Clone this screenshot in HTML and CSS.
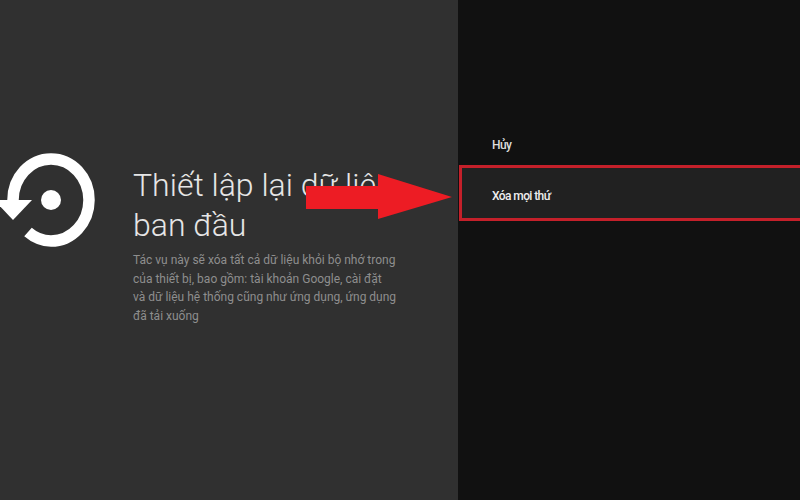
FILE: index.html
```html
<!DOCTYPE html>
<html lang="vi">
<head>
    <meta charset="UTF-8">
    <title>Thiết lập lại dữ liệu ban đầu</title>
    <link rel="stylesheet" href="styles.css">
</head>
<body>
    <div class="screen">
        <div class="info-panel">
            <svg class="reset-icon" width="100" height="100" viewBox="0 150 100 100">
                <path class="ring" d="M13 200 A38 41 0 0 1 51 159 A38 41 0 0 1 89 200 A38 41 0 0 1 51 241 A38 41 0 0 1 28 232"/>
                <polygon class="solid" points="-6,200 32,200 13,220"/>
                <circle class="solid" cx="51" cy="200" r="10"/>
            </svg>
            <div class="info-text">
                <h1>Thiết lập lại dữ liệu ban đầu</h1>
                <p>Tác vụ này sẽ xóa tất cả dữ liệu khỏi bộ nhớ trong<br>của thiết bị, bao gồm: tài khoản Google, cài đặt<br>và dữ liệu hệ thống cũng như ứng dụng, ứng dụng<br>đã tải xuống</p>
            </div>
        </div>
        <div class="menu-panel">
            <div class="menu-item">Hủy</div>
            <div class="menu-item selected">Xóa mọi thứ</div>
        </div>
        <!-- red annotation arrow on top of the title -->
        <svg class="arrow" width="148" height="46" viewBox="0 0 148 46">
            <polygon points="0,12 72,12 72,0 146,23 72,45 72,35 0,35"/>
        </svg>
    </div>
</body>
</html>
```

FILE: styles.css
```css
* {
    box-sizing: border-box;
}
html, body {
    margin: 0;
    height: 100%;
}
body {
    font-family: Roboto, "Noto Sans", sans-serif;
    background: #111;
}
.screen {
    position: relative;
    display: flex;
    width: 800px;
    height: 500px;
    overflow: hidden;
}
.info-panel {
    width: 458px;
    display: flex;
    align-items: flex-start;
    padding-top: 150px;
    background: #303030;
}
.reset-icon {
    flex: none;
    margin-right: 33px;
}
.ring {
    fill: none;
    stroke: #fff;
    stroke-width: 11.5;
}
.solid {
    fill: #fff;
}
.info-text {
    width: 290px;
    padding-top: 15px;
}
.info-text h1 {
    margin: 0 0 6px;
    font-size: 32px;
    font-weight: 300;
    line-height: 40px;
    color: #e6e6e6;
}
.info-text p {
    margin: 0;
    font-size: 12px;
    line-height: 18.5px;
    color: #8e8e8e;
}
.menu-panel {
    flex: 1;
    padding-top: 125px;
    padding-left: 1px;
}
.menu-item {
    height: 40px;
    padding-left: 33px;
    font-size: 12px;
    font-weight: 500;
    letter-spacing: -0.6px;
    line-height: 40px;
    color: #ddd;
}
.menu-item.selected {
    height: 56px;
    line-height: 56px;
    margin-right: -3px;
    padding-left: 30px;
    background: #212121;
    border: 3px solid #c4202a;
    color: #eee;
}
.arrow {
    position: absolute;
    left: 306px;
    top: 174px;
}
.arrow polygon {
    fill: #ed1c24;
}
```
